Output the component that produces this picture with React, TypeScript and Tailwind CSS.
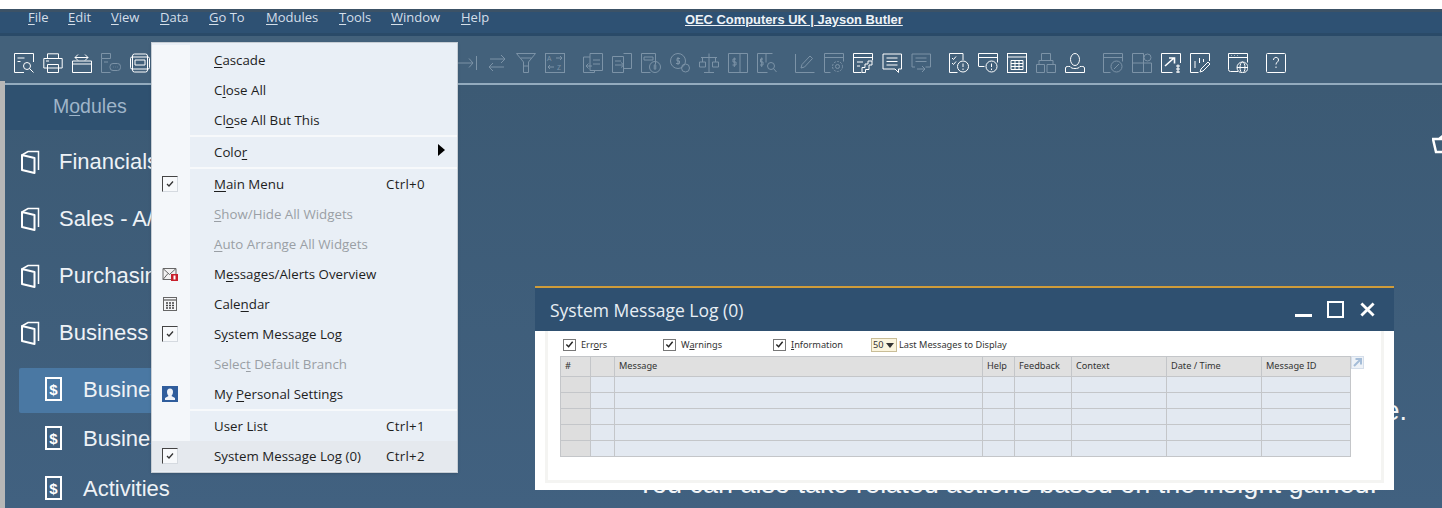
import type { ReactNode } from "react";

const menuBar = [
  { label: "File", key: "F", rest: "ile", w: "w-[40px]" },
  { label: "Edit", key: "E", rest: "dit", w: "w-[43px]" },
  { label: "View", key: "V", rest: "iew", w: "w-[49px]" },
  { label: "Data", key: "D", rest: "ata", w: "w-[49px]" },
  { label: "Go To", key: "G", rest: "o To", w: "w-[57px]" },
  { label: "Modules", key: "M", rest: "odules", w: "w-[73px]" },
  { label: "Tools", key: "T", rest: "ools", w: "w-[52px]" },
  { label: "Window", key: "W", rest: "indow", w: "w-[70px]" },
  { label: "Help", key: "H", rest: "elp", w: "w-[50px]" },
];

type Tool = { art: ReactNode; dim?: boolean; groupStart?: boolean };

const tools: Tool[] = [
  { art: <><path d="M19.5 9V.5H.5v19H10" /><path d="M3.5 5h7M3.5 8.5h3" /><circle cx="13" cy="13" r="3.5" /><path d="M15.5 15.5l4 4" /></> },
  { art: <><path d="M4.5 5V.8h11V5M4.5 15H.8V5.5h18.4V15h-3.7" /><path d="M4.5 11.5h11v8h-11zM4.5 15h11M3 8h3" /></> },
  { art: <><path d="M.5 8h19v11.5H.5zM.5 11h19" /><path d="M3 4.5h13M6 1.5l-3 3 3 3M13 1.5l3 3-3 3" /></> },
  { dim: true, art: <><path d="M.5.5h9v5H.5zM.5 5.5v14h9M3 9h4" /><rect x="9" y="10.5" width="10.5" height="7" rx="3" /><path d="M12 14h.5M14 14h.5M16 14h.5" /></> },
  { art: <><rect x="2.5" y="1" width="15" height="18" rx="2" /><rect x=".5" y="4" width="19" height="12" rx="1.5" /><path d="M5 7h10v5H5z" /></> },
];

const tools2: Tool[] = [
  { dim: true, art: <path d="M0 10h15M11 5.5l4 4.5-4 4.5M18.5 3v14" /> },
  { dim: true, art: <path d="M3 6h15M14 2l4 4-4 4M17 14H2M6 10l-4 4 4 4" /> },
  { dim: true, art: <path d="M.5 .5h19L12.5 9v10.5h-5V9zM4.5 5h11M7.5 13h5" /> },
  { dim: true, art: <><rect x=".5" y=".5" width="19" height="19" /><text x="2" y="8" fontSize="7" stroke="none" fill="currentColor">A</text><text x="12" y="17" fontSize="7" stroke="none" fill="currentColor">Z</text><path d="M11 5h6M15 3l2 2-2 2M9 14H3M5 12l-2 2 2 2" /></> },
  { dim: true, groupStart: true, art: <><path d="M7 .5h12.500v17H7zM.5 4h6.500M.5 4v15.500h11V17.500" /><path d="M10 7h7M10 11h7" /><path d="M9 13H3M5.500 10.500L3 13l2.500 2.500" /></> },
  { dim: true, art: <><path d="M.5 3.500h11v16H.5zM11.500 .5h8v15h-8" /><path d="M3 8h6M3 12h8M9 9.500l3 2.500-3 2.500" /></> },
  { dim: true, art: <><path d="M.5.5h14v11M.5.5v19h9M3 4h9v3H3z" /><circle cx="14" cy="14" r="5.500" /><path d="M14 11v6M12.500 13h3M12.500 15h3" /></> },
  { dim: true, art: <><circle cx="8" cy="8" r="7.500" /><circle cx="15.500" cy="15" r="4" /><path d="M10 5.500H7v2.500h2.500v2.500H6M8 4v8" /></> },
  { dim: true, art: <path d="M10 .5v19M5 19.500h10M2 4.500h16M.5 9h6v5h-6zM13.500 9h6v5h-6zM3.500 4.500V9M16.500 4.500V9" /> },
  { dim: true, art: <><path d="M.5.5h19v19H.5zM12 .5v19" /><path d="M8 6H5v3h3v3H4.500M6.300 4.500V14" /></> },
  { dim: true, art: <><path d="M.5.5h15M.5.5v19h10M9 .5v9" /><path d="M6 6H3.500v3H6v3H3M4.700 4.500V14" /><circle cx="14" cy="13" r="3.500" /><path d="M16.500 15.500l3 3.500" /></> },
  { dim: true, groupStart: true, art: <><path d="M.5 1v18.500h19" /><path d="M6 15l1-3.500L15 3l2.500 2.500L9.500 14z" /></> },
  { dim: true, art: <><path d="M.5 19V.5h19v8M.5 4.500h19M.5 19.500h6" /><circle cx="13.500" cy="13.500" r="2" /><circle cx="13.500" cy="13.500" r="5" strokeDasharray="2 1.200" /></> },
  { art: <><path d="M.5 19.500V.5h19v7M.5 4.500h19M.5 19.500h8M4 9h6M4 13h3" /><path d="M9 19.500v-5h3v-3.500h3v-3h4v4h-3v4.500h-3.500v3z" /></> },
  { art: <><path d="M1 1h18.500v15h-3v3.500l-3.500-3.500H1z" /><path d="M4.500 5h11M4.500 8.500h11M4.500 12h11" /></> },
  { dim: true, art: <><path d="M1 1h18.500v13h-5M1 1v13h3" /><path d="M4.500 5h11M4.500 8.500h11M6 16h8M11 13l3 3-3 3" /></> },
  { groupStart: true, art: <><path d="M14 7V.5H.5v19h8" /><path d="M3 5l1.500 1.500L7 3.500M3 10l1.500 1.500L7 8.500" /><circle cx="14" cy="13.500" r="5.500" /><path d="M14 10.500v3.500M14 15.500v1.500" /></> },
  { art: <><path d="M.5 13V.5h19v9M.5 4.500h19M.5 13.500h6" /><circle cx="13.500" cy="13.500" r="5.500" /><path d="M13.500 10.500v3.500M13.500 15.500v1.500" /></> },
  { art: <><rect x=".5" y=".5" width="19" height="19" /><path d="M.5 4h19M4 7.500h12v9H4zM4 10.500h12M4 13.500h12M8 7.500v9M12 7.500v9" /></> },
  { dim: true, art: <path d="M5.500.5h9v7h-9zM.5 11.500h8v8h-8zM11 11.500h8.500v8H11zM3 11.500V7.500h14v4" /> },
  { art: <><ellipse cx="10" cy="6.500" rx="4.500" ry="6" /><path d="M.5 19.500v-4.500c0-2 3-1.500 4.500-1.500 1 1.500 2.500 2 5 2s4-.5 5-2c1.500 0 4.500-.5 4.500 1.500v4.500z" /></> },
  { dim: true, groupStart: true, art: <><path d="M.5 19.500V.5h19v8M.5 4.500h19M.5 19.500h7" /><circle cx="13.500" cy="13.500" r="5.500" /><path d="M11 16l5-5" /></> },
  { dim: true, art: <><path d="M.5.5h11v9.500h8v9.500H.5zM.5 10h11v9.500M11.500 .5v9.500" /><circle cx="15.500" cy="4.500" r="3.500" /></> },
  { art: <><path d="M19.500 10V.5H.5v19h11" /><path d="M4 13l9-8M8 5h5.500v5.500" strokeWidth="1.600" /><path d="M15 13h4M15 16h4M15 19h4M17 11.500v9" strokeWidth="1.200" /></> },
  { art: <><path d="M19.500 8V.5H.5v19h8" /><path d="M5 8v7M9.500 5v5M13.500 6v3" /><path d="M10 19l1-3 7-7 2 2-7 7z" /></> },
  { groupStart: true, art: <><path d="M10 18.500H2.500a2 2 0 0 1-2-2V.5h19v9M.5 4.500h19M3 2.500h.5M6 2.500h.5M9 2.500h.5" /><circle cx="14.500" cy="14.500" r="5.500" /><ellipse cx="14.500" cy="14.500" rx="2.500" ry="5.500" /><path d="M9 14.500h11" /></> },
  { groupStart: true, art: <><rect x=".5" y=".5" width="19" height="19" rx="1" /><path d="M7.500 7c0-3.500 5-3.500 5 0 0 2-2.500 2-2.500 4.500M10 13.500v1.500" /></> },
];

function ToolIcon({ tool }: { tool: Tool }) {
  return (
    <svg
      viewBox="0 0 20 20"
      fill="none"
      stroke="currentColor"
      strokeWidth="1"
      className={`h-5 w-5 shrink-0 ${tool.dim ? "text-[#7c93a7]" : "text-white"} ${tool.groupStart ? "ml-[9px]" : ""}`}
    >
      {tool.art}
    </svg>
  );
}

function BookIcon() {
  return (
    <svg viewBox="0 0 22 24" fill="none" stroke="currentColor" strokeWidth="2" className="h-6 w-[22px] shrink-0 text-white">
      <path d="M2 5L14.500 8v15L2 20z" strokeLinejoin="round" />
      <path d="M2 5L8 1.500h10.500V20" strokeWidth="1.500" />
    </svg>
  );
}

function DollarDoc() {
  return (
    <div className="flex h-6 w-[17px] shrink-0 items-center justify-center border-2 border-white font-['Liberation_Sans',sans-serif] text-[15px] font-bold leading-none text-white">
      $
    </div>
  );
}

const modules = ["Financials", "Sales - A/R", "Purchasing - A/P", "Business Partners"];

function MenuCheck() {
  return (
    <div className="flex h-[16px] w-[16px] items-center justify-center border-t border-l border-t-[#444] border-l-[#444] border-r border-b border-r-[#d5dae0] border-b-[#d5dae0] bg-[#f7f9fb]">
      <svg viewBox="0 0 10 10" fill="none" stroke="#333" strokeWidth="1.300" className="h-2.5 w-2.5">
        <path d="M2 5l2 2 4-4.500" />
      </svg>
    </div>
  );
}

function MailIcon() {
  return (
    <svg viewBox="0 0 16 14" className="h-[14px] w-4">
      <path d="M1 1.500h13v11H1z" fill="#f1f1f1" stroke="#666" />
      <path d="M1 1.500l6.500 6 6.500-6M1 12.500l5-6" fill="none" stroke="#666" />
      <rect x="9" y="7" width="7" height="7" fill="#c8202c" />
      <rect x="11.500" y="8.500" width="2" height="4" fill="#fff" />
    </svg>
  );
}

function CalendarIcon() {
  return (
    <svg viewBox="0 0 14 14" className="h-[14px] w-[14px]">
      <rect x=".5" y=".5" width="13" height="13" fill="#f5f6f8" stroke="#666" />
      <path d="M1 3h12" stroke="#777" strokeWidth="1.500" />
      <path d="M3 6h2M6 6h2M9 6h2M3 8.500h2M6 8.500h2M9 8.500h2M3 11h2M6 11h2M9 11h2" stroke="#444" strokeWidth="1.500" />
    </svg>
  );
}

function PersonIcon() {
  return (
    <svg viewBox="0 0 16 16" className="h-4 w-4">
      <rect width="16" height="16" fill="#2f5d9c" />
      <path d="M8 2.500c2 0 3 1.500 3 3.500s-1 3-1.500 4l3.500 2v2H3v-2l3.500-2C6 9 5 8 5 6s1-3.500 3-3.500z" fill="#f0f3f8" />
    </svg>
  );
}

type Row = {
  pre: string;
  key: string;
  post: string;
  shortcut?: string;
  off?: boolean;
  icon?: ReactNode;
  hot?: boolean;
  arrow?: boolean;
};

const groups: Row[][] = [
  [
    { pre: "", key: "C", post: "ascade" },
    { pre: "C", key: "l", post: "ose All" },
    { pre: "Cl", key: "o", post: "se All But This" },
  ],
  [{ pre: "Colo", key: "r", post: "", arrow: true }],
  [
    { pre: "", key: "M", post: "ain Menu", shortcut: "Ctrl+0", icon: <MenuCheck /> },
    { pre: "", key: "S", post: "how/Hide All Widgets", off: true },
    { pre: "", key: "A", post: "uto Arrange All Widgets", off: true },
    { pre: "M", key: "e", post: "ssages/Alerts Overview", icon: <MailIcon /> },
    { pre: "Cale", key: "n", post: "dar", icon: <CalendarIcon /> },
    { pre: "S", key: "y", post: "stem Message Log", icon: <MenuCheck /> },
    { pre: "Selec", key: "t", post: " Default Branch", off: true },
    { pre: "My ", key: "P", post: "ersonal Settings", icon: <PersonIcon /> },
  ],
  [
    { pre: "User List", key: "", post: "", shortcut: "Ctrl+1" },
    { pre: "System Message Log (0)", key: "", post: "", shortcut: "Ctrl+2", icon: <MenuCheck />, hot: true },
  ],
];

function MenuRow({ row }: { row: Row }) {
  return (
    <div className={`flex h-[30px] items-center ${row.hot ? "bg-[#e5e9ee]" : ""}`}>
      <div className={`-mr-[2px] flex h-full w-[38px] shrink-0 items-center justify-center pr-[2px] ${row.hot ? "" : "bg-[#f4f7fa]"}`}>{row.icon}</div>
      <div className={`ml-[26px] flex-1 pt-[1px] ${row.off ? "text-[#9a9fa5]" : "text-[#1e1e1e]"}`}>
        {row.pre}
        {row.key && <u className="underline-offset-2">{row.key}</u>}
        {row.post}
      </div>
      {row.shortcut && <div className="w-[71px] pt-[1px] tracking-[0.3px] text-[#1e1e1e]">{row.shortcut}</div>}
      {row.arrow && <div className="mr-[12px] mb-[4px] h-0 w-0 border-y-[6px] border-l-[7px] border-y-transparent border-l-black" />}
    </div>
  );
}

function WindowMenu() {
  return (
    <div className="absolute top-[42px] left-[151px] w-[307px] border border-[#c6cdd4] bg-[#e9eff6] pt-[2px] pb-[1px] font-['Open_Sans',sans-serif] text-[13.3px] shadow-sm">
      {groups.map((rows, i) => (
        <div key={i}>
          {i > 0 && (
            <div className="flex h-[2px]">
              <div className="w-[38px] bg-[#f4f7fa]" />
              <div className="flex-1 bg-[#f7f9fb]" />
            </div>
          )}
          {rows.map((row) => (
            <MenuRow key={row.pre + row.key + row.post} row={row} />
          ))}
        </div>
      ))}
    </div>
  );
}

function LogCheck({ label, children, w }: { label: string; children: ReactNode; w: string }) {
  return (
    <label aria-label={label} className={`flex items-center gap-[5px] ${w}`}>
      <span className="flex h-[12px] w-[13px] items-center justify-center border border-[#777] bg-white">
        <svg viewBox="0 0 10 10" fill="none" stroke="#222" strokeWidth="1.600" className="h-[9px] w-[9px]">
          <path d="M1.500 5l2.500 2.500L8.500 2" />
        </svg>
      </span>
      <span>{children}</span>
    </label>
  );
}

const columns = [
  { name: "#", w: "w-[30px]", cell: "bg-[#dedede]" },
  { name: "", w: "w-[24px]", cell: "" },
  { name: "Message", w: "w-[368px]", cell: "" },
  { name: "Help", w: "w-[32px]", cell: "" },
  { name: "Feedback", w: "w-[57px]", cell: "" },
  { name: "Context", w: "w-[95px]", cell: "" },
  { name: "Date / Time", w: "w-[95px]", cell: "" },
  { name: "Message ID", w: "w-[89px]", cell: "" },
];

function MessageLog() {
  return (
    <div className="absolute top-[286px] left-[535px] flex h-[204px] w-[859px] flex-col border-t-2 border-[#cf9c3a]">
      <div className="flex h-[43px] shrink-0 items-center justify-between bg-[#2f5070] pr-[19px] pl-[15px]">
        <div className="pt-[1px] font-['Open_Sans',sans-serif] text-[17.5px] text-[#e8eef4]">System Message Log (0)</div>
        <div className="flex items-center">
          <div className="mt-[12px] h-[3px] w-[17px] bg-white" />
          <div className="ml-[15px] h-[17px] w-[17px] border-2 border-white" />
          <svg viewBox="0 0 16 16" stroke="white" strokeWidth="3" className="ml-[16px] h-[15px] w-[15px]">
            <path d="M1.500 1.500l13 13M14.500 1.500l-13 13" />
          </svg>
        </div>
      </div>
      <div className="flex-1 bg-white px-[10px] pt-0 pb-[7px]">
        <div className="h-full border-x-[3px] border-b-[3px] border-[#f4f4f2] pl-[12px] font-['Noto_Sans',sans-serif] text-[9.2px] text-[#333]">
          <div className="flex h-[25px] items-center pt-[3px] pl-[3px]">
            <LogCheck label="Errors" w="w-[100px]">Err<u>o</u>rs</LogCheck>
            <LogCheck label="Warnings" w="w-[110px]">W<u>a</u>rnings</LogCheck>
            <LogCheck label="Information" w="w-[98px]"><u>I</u>nformation</LogCheck>
            <div className="flex h-[14px] w-[26px] items-center justify-between border border-[#c9bd97] bg-[#fbf5de] pr-[2px] pl-[1px]">
              50
              <div className="h-0 w-0 border-x-[4px] border-t-[5px] border-x-transparent border-t-[#333]" />
            </div>
            <div className="ml-[2px]">Last Messages to Display</div>
          </div>
          <div className="flex items-start">
            <table className="w-[790px] table-fixed border-collapse">
              <thead>
                <tr className="h-[20px] bg-[#e0e0e0]">
                  {columns.map((c) => (
                    <th key={c.name} className={`${c.w} border border-[#c4c6c9] pb-[2px] pl-[4px] text-left font-normal`}>
                      {c.name}
                    </th>
                  ))}
                </tr>
              </thead>
              <tbody>
                {[0, 1, 2, 3, 4].map((r) => (
                  <tr key={r} className="h-[16px] bg-[#e3e9f1]">
                    {columns.map((c) => (
                      <td key={c.name} className={`border border-[#c4c6c9] ${c.cell}`} />
                    ))}
                  </tr>
                ))}
              </tbody>
            </table>
            <svg viewBox="0 0 13 13" fill="none" className="h-[13px] w-[13px]">
              <rect x=".5" y=".5" width="12" height="12" fill="#eef2f7" stroke="#d5deea" />
              <path d="M3 10l7-7M4.500 3H10v5.500" stroke="#a5bdd8" strokeWidth="2" />
            </svg>
          </div>
        </div>
      </div>
    </div>
  );
}

export default function App() {
  return (
    <div className="relative flex h-[508px] w-[1442px] flex-col overflow-hidden bg-white">
      <div className="h-[9px] shrink-0 bg-white" />

      <header className="flex h-[27px] shrink-0 border-t-[3px] border-b-[3px] border-t-[#3c5266] border-b-[#2a4a68] bg-[#2e5173]">
        <nav className="flex w-[685px] shrink-0 pl-[28px] font-['Open_Sans',sans-serif] text-[13px] leading-[11px] text-[#d5dfe9]">
          {menuBar.map((m) => (
            <div key={m.label} className={m.w}>
              <u className="underline-offset-2">{m.key}</u>
              {m.rest}
            </div>
          ))}
        </nav>
        <div className="font-['Liberation_Sans',sans-serif] text-[12.900px] leading-[16px] font-bold text-[#eef3f7] underline">
          OEC Computers UK | Jayson Butler
        </div>
      </header>

      <div className="flex h-[47px] shrink-0 items-start gap-[9px] bg-[#43617b] pt-[17px] pl-[14px]">
        {tools.map((t, i) => (
          <ToolIcon key={i} tool={t} />
        ))}
        <div className="w-[290px] shrink-0" />
        {tools2.map((t, i) => (
          <ToolIcon key={i} tool={t} />
        ))}
      </div>
      <div className="h-[2px] shrink-0 bg-[#93abbe]" />

      <div className="flex flex-1 overflow-hidden bg-gradient-to-b from-[#3c5a74] to-[#416180]">
        <div className="w-[5px] shrink-0 bg-[#b7b7b7]" />
        <aside className="w-[146px] shrink-0 whitespace-nowrap font-['Liberation_Sans',sans-serif]">
          <div className="flex h-[45px] items-center bg-[#2f5170] pb-[1px] pl-[48px] text-[19.500px] text-[#9fb5c9]">
            M<u className="underline-offset-2">o</u>dules
          </div>
          <div className="pt-[3px]">
            {modules.map((m) => (
              <div key={m} className="flex h-[57px] items-center gap-[17px] pl-[15px] text-[22px] text-[#eef2f6]">
                <BookIcon />
                {m}
              </div>
            ))}
          </div>
          <div className="mt-[7px] ml-[14px] flex h-[45px] w-[140px] items-center gap-[21px] rounded-l-[2px] bg-[#4a78a3] pb-[3px] pl-[26px] text-[22px] text-[#eef2f6]">
            <DollarDoc />
            Business Partner Master Data
          </div>
          <div className="flex h-[50px] items-center gap-[21px] pl-[40px] text-[22px] text-[#eef2f6]">
            <DollarDoc />
            Business Partner Catalog
          </div>
          <div className="flex h-[50px] items-center gap-[21px] pl-[40px] text-[22px] text-[#eef2f6]">
            <DollarDoc />
            Activities
          </div>
        </aside>

        <main className="flex flex-1 flex-col items-end overflow-hidden whitespace-nowrap font-['Liberation_Sans',sans-serif] text-[27px] text-[#f1f4f7]">
          <svg viewBox="0 0 24 20" fill="none" stroke="white" strokeWidth="2.500" className="mt-[49px] -mr-[14px] h-5 w-6 shrink-0">
            <path d="M1 5h22l-3 13H4zM7 5l5-4" />
          </svg>
          <div className="mt-[243px] mr-[35px] leading-[28px]">e.</div>
          <div className="mt-[45px] mr-[65px] leading-[28px]">You can also take related actions based on the insight gained.</div>
        </main>
      </div>

      <div className="absolute top-[81px] bottom-0 left-0 w-[5px] bg-[#b7b7b7]" />
      <WindowMenu />
      <MessageLog />
    </div>
  );
}
